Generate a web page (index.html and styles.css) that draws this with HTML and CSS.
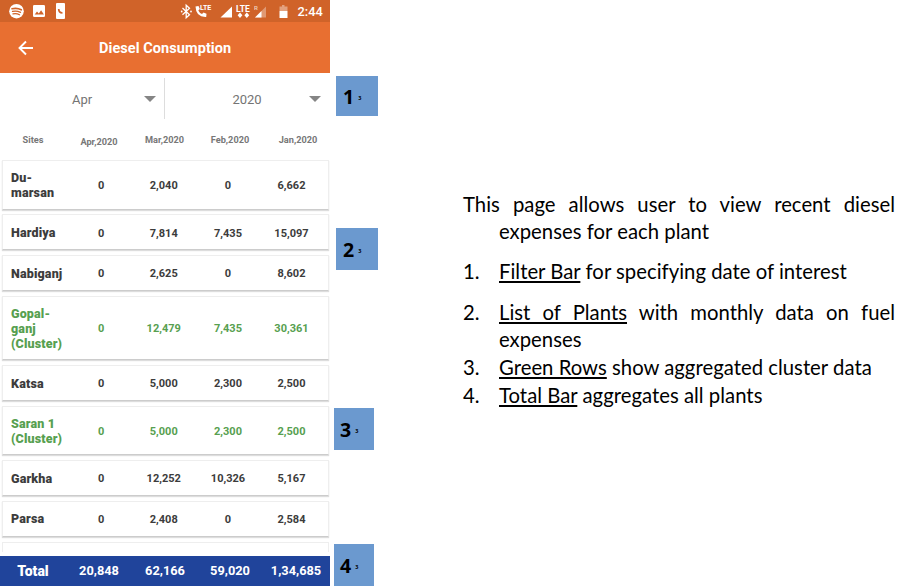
FILE: index.html
```html
<!DOCTYPE html>
<html lang="en">
<head>
<meta charset="utf-8">
<title>Diesel Consumption</title>
<link rel="stylesheet" href="styles.css">
</head>
<body>
<main class="slide">
  <section class="phone">
    <div class="status">
      <svg class="status-icons" width="330" height="22" viewBox="0 0 330 22" fill="#fff">
        <circle cx="16.500" cy="11.200" r="7.300"/>
        <g fill="none" stroke="#d06329" stroke-linecap="round"><path stroke-width="1.600" d="M12 8.800q5-1.300 9.300 1"/><path stroke-width="1.300" d="M12.500 11.400q4.300-1 8 .9M13 13.900q3.500-.8 6.500.8"/></g>
        <rect x="33" y="5" width="12" height="12" rx="1.300"/>
        <path fill="#d06329" d="M34.700 14.500l2.300-3 1.800 2 2.300-3.200 2.800 4.200z"/>
        <rect x="56" y="3" width="9" height="16" rx="1"/>
        <path fill="none" stroke="#d06329" stroke-width="1.700" d="M58.700 9q0 3.700 3.800 4"/>
        <path fill="none" stroke="#fff" stroke-width="1.300" d="M182.500 8l7 6.700-3.300 3V5.300l3.300 3-7 6.400"/>
        <circle cx="181.700" cy="11.500" r=".9"/><circle cx="191" cy="11.500" r=".9"/>
        <path d="M195.500 6.500l3-.5 1.300 3-1.500 1.400q1.200 2.500 3.700 3.700l1.500-1.500 3 1.200-.3 3.200Q196 17.500 195.500 6.500z"/>
        <path d="M220.500 17.500l11.500-11v11z"/>
        <path d="M240 12.500l2.400 2.700-2.400 2.700-2.400-2.700zM246.800 12.500l2.400 2.700-2.400 2.700-2.400-2.700z"/>
        <path opacity=".35" d="M255 17.500l11-11v11z"/><path d="M255 17.500l6.500-6.500v6.500z"/>
        <path opacity=".4" d="M282 5h2.500v1.500h3V11h-8V6.500h2.500z"/><path d="M279.500 11h8v7h-8z"/>
        <text class="lte-small" x="200" y="10">LTE</text>
        <text class="lte" x="236" y="11.500">LTE</text>
        <text class="roam" x="254" y="10">R</text>
        <text class="clock" x="297.500" y="16">2:44</text>
      </svg>
    </div>
    <header class="appbar">
      <svg class="back" width="16" height="16" viewBox="0 0 16 16" fill="none" stroke="#fff" stroke-width="1.900"><path d="M15 8H2M8 1.500L1.500 8 8 14.500"/></svg>
      <h1 class="title">Diesel Consumption</h1>
    </header>
    <div class="filters">
      <div class="filter"><span class="choice">Apr</span><i class="caret"></i></div>
      <div class="filter"><span class="choice">2020</span><i class="caret"></i></div>
    </div>
    <div class="months"><span>Sites</span><span class="current">Apr,2020</span><span>Mar,2020</span><span>Feb,2020</span><span>Jan,2020</span></div>
    <div class="list">
      <div class="row two"><b>Du-<br>marsan</b><span>0</span><span>2,040</span><span>0</span><span>6,662</span></div>
      <div class="row"><b>Hardiya</b><span>0</span><span>7,814</span><span>7,435</span><span>15,097</span></div>
      <div class="row"><b>Nabiganj</b><span>0</span><span>2,625</span><span>0</span><span>8,602</span></div>
      <div class="row three cluster"><b>Gopal-<br>ganj<br>(Cluster)</b><span>0</span><span>12,479</span><span>7,435</span><span>30,361</span></div>
      <div class="row"><b>Katsa</b><span>0</span><span>5,000</span><span>2,300</span><span>2,500</span></div>
      <div class="row two cluster"><b>Saran 1<br>(Cluster)</b><span>0</span><span>5,000</span><span>2,300</span><span>2,500</span></div>
      <div class="row"><b>Garkha</b><span>0</span><span>12,252</span><span>10,326</span><span>5,167</span></div>
      <div class="row"><b>Parsa</b><span>0</span><span>2,408</span><span>0</span><span>2,584</span></div>
      <div class="row partial"></div>
    </div>
    <footer class="total"><b>Total</b><span>20,848</span><span>62,166</span><span>59,020</span><span>1,34,685</span></footer>
  </section>
  <aside class="markers">
    <div class="marker m1">1<small>3</small></div>
    <div class="marker m2">2<small>3</small></div>
    <div class="marker m3">3<small>3</small></div>
    <div class="marker m4">4<small>3</small></div>
  </aside>
  <article class="notes">
    <p class="intro"><span class="spread">This page allows user to view recent diesel</span><span class="cont">expenses for each plant</span></p>
    <ol class="points">
      <li class="spaced"><span class="n">1.</span><span><u>Filter Bar</u> for specifying date of interest</span></li>
      <li><span class="n">2.</span><div class="item"><span class="spread"><u>List of Plants</u> with monthly data on fuel</span><span>expenses</span></div></li>
      <li><span class="n">3.</span><span><u>Green Rows</u> show aggregated cluster data</span></li>
      <li><span class="n">4.</span><span><u>Total Bar</u> aggregates all plants</span></li>
    </ol>
  </article>
</main>
</body>
</html>
```

FILE: styles.css
```css
* { box-sizing: border-box; }
body { margin: 0; background: #fff; }
.slide { display: flex; width: 904px; height: 588px; overflow: hidden; }
.phone { width: 330px; height: 586px; flex: none; display: flex; flex-direction: column; font-family: Roboto, sans-serif; }
.status { height: 22px; background: #d06329; }
.status-icons { display: block; }
.status-icons text { font-family: Roboto, sans-serif; font-weight: 500; }
.status-icons .lte-small { font-size: 7px; font-weight: 700; }
.status-icons .lte { font-size: 8.5px; font-weight: 700; }
.status-icons .roam { font-size: 6px; opacity: .7; }
.status-icons .clock { font-size: 12.8px; }
.appbar { height: 51px; background: #e86f31; display: flex; align-items: center; padding-left: 18px; }
.back { flex: none; }
.title { margin: 2px 0 0 65px; font-size: 14.5px; letter-spacing: .07px; font-weight: 700; color: #fff; white-space: nowrap; }
.filters { height: 46px; display: grid; grid-template-columns: 165px 165px; padding-top: 5px; }
.filter { height: 41px; display: flex; align-items: center; padding: 1px 9px 0 0; }
.filter:first-child { border-right: 1px solid #ddd; padding-right: 8px; }
.choice { flex: 1; text-align: center; font-size: 13px; color: #747474; padding-left: 20px; }
.caret { border: 6px solid transparent; border-top-color: #858585; border-bottom: 0; margin-top: -1px; }
.months { height: 41.200px; flex: none; display: grid; grid-template-columns: 66px 66px 65px 66px 70px; margin-right: -3px; padding-top: 15px; text-align: center; font-size: 9.200px; line-height: 11px; font-weight: 700; color: #777; }
.current { padding-top: 2px; }
.list { display: flex; flex-direction: column; gap: 4.750px; padding: 0 1.500px; height: 395.800px; overflow: hidden; }
.row { flex: none; height: 36px; display: grid; grid-template-columns: 67px 63.500px 61.500px 67px 60px; align-items: center; border: 1px solid #eee; border-bottom-color: #ccc; box-shadow: 0 1px 1px #ddd; text-align: center; font-size: 11px; font-weight: 700; color: #3c3c3c; }
.row b { text-align: left; padding: 0 0 0 8.500px; font-size: 12.500px; letter-spacing: .15px; line-height: 15px; }
.row span { padding-top: 1.500px; }
.two { height: 49.500px; }
.three { height: 64.500px; }
.cluster { color: #57a050; }
.partial { height: 10px; border-bottom: 0; box-shadow: none; }
.total { height: 30px; background: #20449b; color: #fff; display: grid; grid-template-columns: 66px 66px 66px 64px 68px; align-items: center; text-align: center; font-size: 12.800px; font-weight: 700; }
.total b { font-size: 14px; }
.markers { width: 133px; flex: none; display: flex; flex-direction: column; padding: 76px 0 0 4px; }
.marker { flex: none; width: 42px; height: 42px; margin-left: 2px; padding-left: 7px; background: #6b99cf; color: #000; font: 700 19.500px "Open Sans", sans-serif; display: flex; align-items: center; }
.marker small { font-size: 5.500px; margin: 4px 0 0 4px; }
.m1 { height: 40px; }
.m2 { margin-top: 112px; }
.m3 { margin: 138px 0 0; width: 40px; padding-left: 6px; }
.m4 { margin: 94px 0 0; width: 40px; padding-left: 6px; }
.notes { width: 432px; padding-top: 190.700px; font: 20.300px/27.700px Lato, sans-serif; color: #000; letter-spacing: .02px; }
.intro { margin: 0 0 12.400px; }
.spread { display: block; text-align: justify; text-align-last: justify; }
.cont { display: block; padding-left: 36px; }
.points { list-style: none; margin: 0; padding: 0; }
.points li { display: flex; }
.points .spaced { margin-bottom: 12.400px; }
.n { width: 36px; flex: none; }
.item { flex: 1; }
.item > span { display: block; }
.points u { text-decoration-thickness: 1.500px; text-underline-offset: 2px; text-decoration-skip-ink: none; }
```
